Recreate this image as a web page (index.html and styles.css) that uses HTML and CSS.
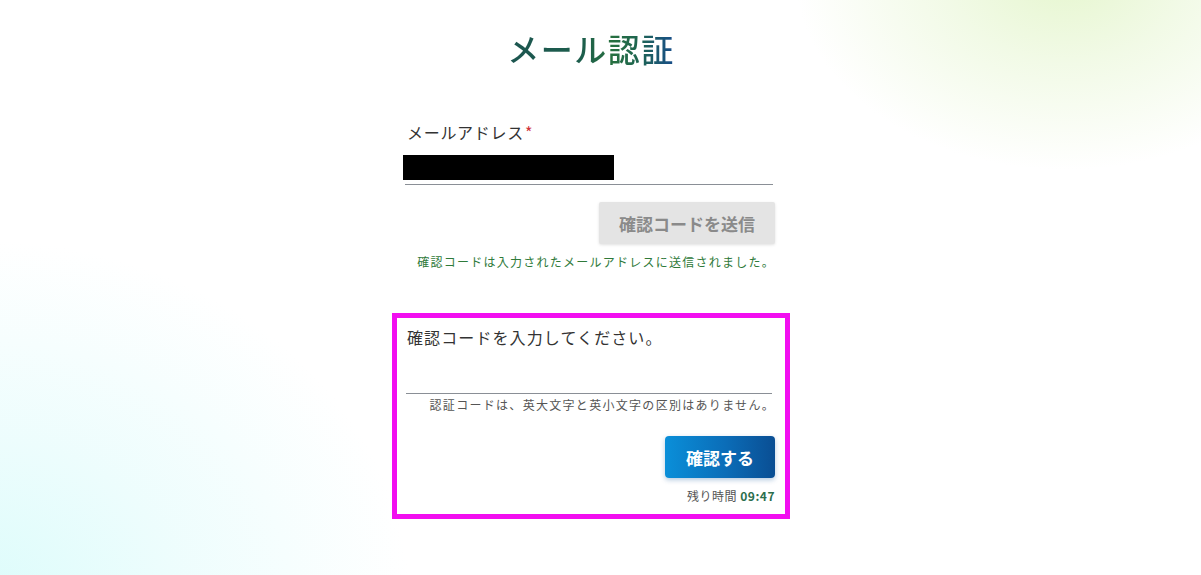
FILE: index.html
```html
<!DOCTYPE html>
<html lang="ja">
<head>
  <meta charset="UTF-8">
  <meta name="viewport" content="width=device-width, initial-scale=1.0">
  <title>メール認証</title>
  <link rel="stylesheet" href="styles.css">
</head>
<body>
  <div class="page">
    <div class="panel">
      <h1 class="title">メール認証</h1>

      <div class="email">
        <label class="label">メールアドレス<span class="req">*</span></label>
        <div class="field">
          <div class="masked"></div>
        </div>
        <div class="row">
          <button class="btn-send" disabled>確認コードを送信</button>
        </div>
        <p class="sent">確認コードは入力されたメールアドレスに送信されました。</p>
      </div>

      <div class="verify">
        <p class="prompt">確認コードを入力してください。</p>
        <div class="field code"></div>
        <p class="hint">認証コードは、英大文字と英小文字の区別はありません。</p>
        <div class="row">
          <button class="btn-confirm">確認する</button>
        </div>
        <p class="timer">残り時間 <b>09:47</b></p>
      </div>
    </div>
  </div>
</body>
</html>
```

FILE: styles.css
```css
* {
  box-sizing: border-box;
}
html, body {
  margin: 0;
  height: 100%;
}
body {
  font-family: "Noto Sans CJK JP", "Noto Sans", sans-serif;
  color: #333;
  background:
    radial-gradient(ellipse 270px 195px at 1065px -25px, #e6f6cf 0%, rgba(236, 248, 220, 0.7) 45%, rgba(255, 255, 255, 0) 100%),
    radial-gradient(ellipse 430px 360px at -20px 600px, #dcfcfb 0%, rgba(228, 252, 252, 0.6) 50%, rgba(255, 255, 255, 0) 100%),
    #fff;
  overflow: hidden;
}
.page {
  display: flex;
  justify-content: center;
  padding: 28px 19px 0 0;
}
.panel {
  width: 398px;
  display: flex;
  flex-direction: column;
}
.title {
  align-self: center;
  margin: 0;
  font-size: 32px;
  line-height: 40px;
  font-weight: 500;
  letter-spacing: 1.5px;
  background: linear-gradient(90deg, #1c5550 0%, #1d5e4c 45%, #27703f 62%, #1e6550 78%, #184d8c 100%);
  -webkit-background-clip: text;
  background-clip: text;
  color: transparent;
}
.email {
  margin-top: 52px;
  padding: 0 15px 0 11px;
  display: flex;
  flex-direction: column;
}
.label {
  font-size: 16px;
  line-height: 24px;
  letter-spacing: 0.7px;
  padding-left: 4px;
  color: #333;
}
.req {
  color: #d0333a;
  margin-left: 1px;
}
.field {
  border-bottom: 1px solid #8a8f96;
  margin-left: 2px;
  margin-right: 2px;
}
.email .field {
  padding: 11px 0 4px;
}
.masked {
  width: 211px;
  height: 25px;
  background: #000;
  margin-left: -2px;
}
.row {
  display: flex;
  justify-content: flex-end;
}
.btn-send {
  margin-top: 17px;
  width: 176px;
  height: 42px;
  border: none;
  border-radius: 2px;
  background: #e4e4e4;
  color: #8a8a8a;
  font-family: inherit;
  font-size: 17px;
  font-weight: 700;
  box-shadow: 0 1px 3px rgba(0, 0, 0, 0.12);
}
.sent {
  margin: 9px 0 0;
  font-size: 12px;
  line-height: 18px;
  letter-spacing: 1.25px;
  text-align: right;
  color: #2f7a3a;
}
.verify {
  margin-top: 42px;
  border: 5px solid #f20ef0;
  padding: 7px 10px 9px;
  display: flex;
  flex-direction: column;
}
.prompt {
  margin: 0;
  font-size: 16px;
  line-height: 24px;
  letter-spacing: 1.1px;
  color: #333;
}
.field.code {
  height: 45px;
  margin: 0 3px 0 -1px;
}
.hint {
  margin: 2px 0 0;
  font-size: 12px;
  line-height: 18px;
  letter-spacing: 1.3px;
  text-align: right;
  color: #555;
}
.btn-confirm {
  margin-top: 22px;
  width: 110px;
  height: 42px;
  border: none;
  border-radius: 4px;
  background: linear-gradient(90deg, #0a8fd9 0%, #0b6db8 55%, #0a4e93 100%);
  color: #fff;
  font-family: inherit;
  font-size: 17px;
  font-weight: 700;
  box-shadow: 0 2px 5px rgba(10, 80, 150, 0.3);
}
.timer {
  margin: 9px 0 0;
  font-size: 12px;
  line-height: 18px;
  text-align: right;
  color: #555;
  letter-spacing: 0.5px;
}
.timer b {
  color: #2b6e4d;
  font-weight: 700;
}
```
